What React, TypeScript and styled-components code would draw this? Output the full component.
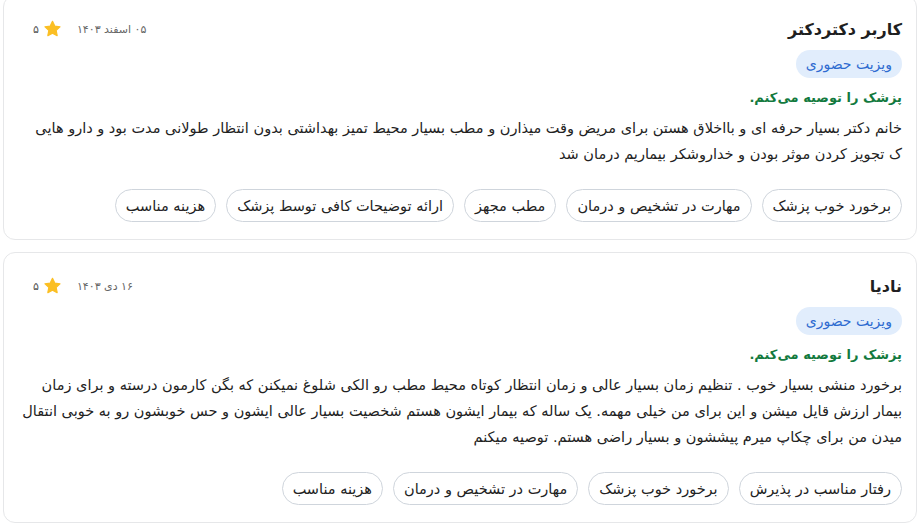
import React from "react";
import styled, { createGlobalStyle } from "styled-components";

type Review = {
  name: string;
  date: string;
  rating: string;
  visit: string;
  text: string;
  tags: string[];
};

const reviews: Review[] = [
  {
    name: "کاربر دکتردکتر",
    date: "۰۵ اسفند ۱۴۰۳",
    rating: "۵",
    visit: "ویزیت حضوری",
    text: "خانم دکتر بسیار حرفه ای و بااخلاق هستن برای مریض وقت میذارن و مطب بسیار محیط تمیز بهداشتی بدون انتظار طولانی مدت بود و دارو هایی ک تجویز کردن موثر بودن و خداروشکر بیماریم درمان شد",
    tags: [
      "برخورد خوب پزشک",
      "مهارت در تشخیص و درمان",
      "مطب مجهز",
      "ارائه توضیحات کافی توسط پزشک",
      "هزینه مناسب",
    ],
  },
  {
    name: "نادیا",
    date: "۱۶ دی ۱۴۰۳",
    rating: "۵",
    visit: "ویزیت حضوری",
    text: "برخورد منشی بسیار خوب . تنظیم زمان بسیار عالی و زمان انتظار کوتاه محیط مطب رو الکی شلوغ نمیکنن که بگن کارمون درسته و برای زمان بیمار ارزش قایل میشن و این برای من خیلی مهمه. یک ساله که بیمار ایشون هستم شخصیت بسیار عالی ایشون و حس خوبشون رو به خوبی انتقال میدن من برای چکاپ میرم پیششون و بسیار راضی هستم. توصیه میکنم",
    tags: [
      "رفتار مناسب در پذیرش",
      "برخورد خوب پزشک",
      "مهارت در تشخیص و درمان",
      "هزینه مناسب",
    ],
  },
];

const GlobalStyle = createGlobalStyle`
  html, body {
    margin: 0;
    padding: 0;
    background: #ffffff;
    overflow: hidden;
  }
  body {
    font-family: "DejaVu Sans", "Noto Sans", sans-serif;
    color: #222;
  }
`;

const StarIcon = () => (
  <svg width="19" height="18" viewBox="0 0 24 24">
    <path
      d="M12 1.8l3.05 6.35 6.95.9-5.1 4.85 1.3 6.95L12 17.5l-6.2 3.35 1.3-6.95L2 9.05l6.95-.9z"
      fill="#fbbf24"
      stroke="#fbbf24"
      strokeWidth="1.6"
      strokeLinejoin="round"
    />
  </svg>
);

const App = () => {
  return (
    <Page dir="rtl">
      <GlobalStyle />
      {reviews.map((r, i) => (
        <Card key={i}>
          <Header>
            <Name>{r.name}</Name>
            <Meta>
              <DateText>{r.date}</DateText>
              <Rating>
                <StarIcon />
                <span>{r.rating}</span>
              </Rating>
            </Meta>
          </Header>
          <VisitBadge>{r.visit}</VisitBadge>
          <Recommend>پزشک را توصیه می‌کنم.</Recommend>
          <Body>{r.text}</Body>
          <Tags>
            {r.tags.map((t) => (
              <Tag key={t}>{t}</Tag>
            ))}
          </Tags>
        </Card>
      ))}
    </Page>
  );
};

const Page = styled.div`
  display: flex;
  flex-direction: column;
  gap: 12px;
  padding-left: 3px;
  margin-top: -5px;
`;

const Card = styled.div`
  display: flex;
  flex-direction: column;
  align-items: flex-start;
  background: #fff;
  border: 1px solid #e6e7e9;
  border-radius: 12px;
  padding: 20px 14px 17px 16px;
`;

const Header = styled.div`
  display: flex;
  align-items: center;
  justify-content: space-between;
  align-self: stretch;
  height: 26px;
`;

const Name = styled.div`
  font-size: 16px;
  font-weight: 700;
  color: #1f1f1f;
`;

const Meta = styled.div`
  display: flex;
  align-items: center;
  gap: 15px;
  margin-left: 13px;
`;

const DateText = styled.span`
  font-size: 11px;
  color: #666;
`;

const Rating = styled.span`
  display: flex;
  align-items: center;
  gap: 4px;
  font-size: 11px;
  color: #555;
`;

const VisitBadge = styled.span`
  margin-top: 8px;
  height: 28px;
  display: inline-flex;
  align-items: center;
  padding: 0 10px;
  border-radius: 14px;
  background: #e1edfc;
  color: #2e6bd0;
  font-size: 14px;
`;

const Recommend = styled.div`
  margin-top: 8px;
  line-height: 24px;
  font-size: 13px;
  font-weight: 700;
  color: #137a3e;
`;

const Body = styled.p`
  margin: 5px 0 0;
  font-size: 14.5px;
  line-height: 26px;
  color: #222;
`;

const Tags = styled.div`
  display: flex;
  flex-wrap: wrap;
  gap: 10px;
  margin-top: 22px;
`;

const Tag = styled.span`
  height: 33px;
  box-sizing: border-box;
  display: inline-flex;
  align-items: center;
  padding: 0 10px;
  border: 1px solid #cfd5dc;
  border-radius: 17px;
  font-size: 14.5px;
  color: #222;
`;

export default App;
